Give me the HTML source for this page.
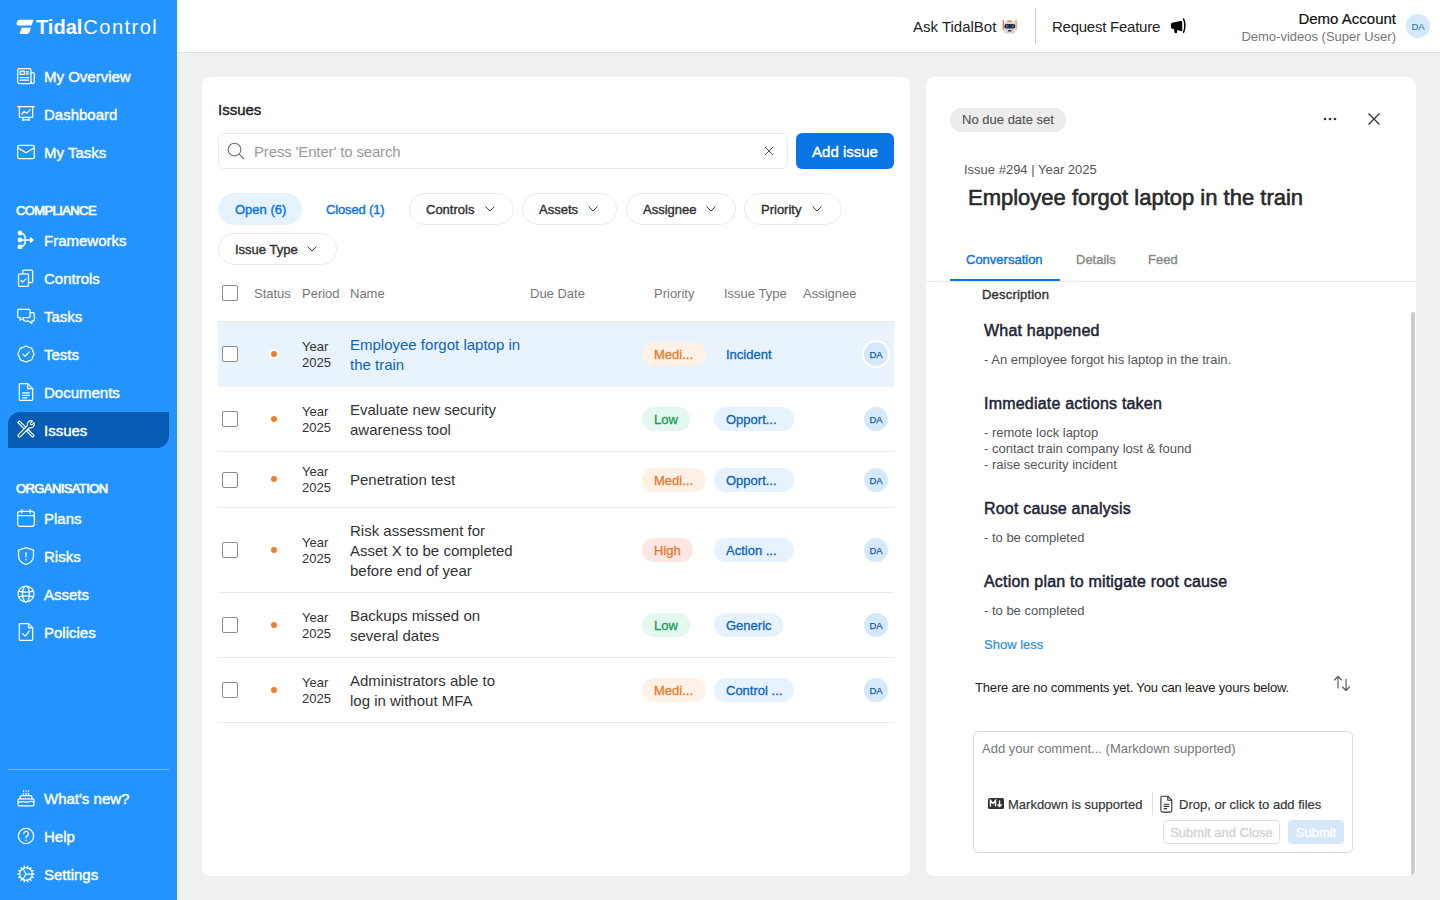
<!DOCTYPE html>
<html><head><meta charset="utf-8">
<style>
*{box-sizing:border-box;margin:0;padding:0}
html,body{width:1440px;height:900px;overflow:hidden;background:#f0f0f0;font-family:"Liberation Sans",sans-serif;color:#222}
.abs{position:absolute;white-space:nowrap}
.sb{font-weight:normal !important;-webkit-text-stroke:0.5px currentColor}
#side{position:absolute;left:0;top:0;width:177px;height:900px;background:#2394ff;color:#fff}
.nav{position:absolute;left:0;width:177px;height:36px}
.nav svg{position:absolute;left:16px;top:7px;width:20px;height:20px;fill:none;stroke:#fff;stroke-width:1.5;stroke-linecap:round;stroke-linejoin:round}
.nav .t{position:absolute;left:44px;top:0;line-height:36px;font-size:15px;font-weight:normal;-webkit-text-stroke:0.4px #fff;white-space:nowrap}
.nav.sel{left:8px;width:161px;background:#055cb2;border-radius:12px 0 12px 0}
.nav.sel svg{left:8px}
.nav.sel .t{left:36px;top:1px}
.sec{position:absolute;left:16px;font-size:13px;font-weight:normal;-webkit-text-stroke:0.7px #fff;letter-spacing:-0.6px}
#hdr{position:absolute;left:177px;top:0;width:1263px;height:53px;background:#fff;border-bottom:1px solid #e0e0e0}
.card{position:absolute;background:#fff;border-radius:8px}
.t13{font-size:13px}
.pill{position:absolute;top:193px;height:32px;border:1px solid #ebebeb;border-radius:16px;font-size:13px;font-weight:normal;-webkit-text-stroke:0.4px currentColor;color:#333;line-height:32px;padding-left:16px;white-space:nowrap}
.pill svg{position:absolute;top:12px;width:10px;height:6px;fill:none;stroke:#444;stroke-width:1}
.th{position:absolute;top:286px;font-size:13px;line-height:16px;color:#777;white-space:nowrap}
.cb{position:absolute;left:222px;width:16px;height:16px;border:1.5px solid #8c8c8c;border-radius:2px;background:#fff}
.row{position:absolute;left:218px;width:676px;border-bottom:1px solid #ebebeb}
.dot{position:absolute;left:271px;width:6px;height:6px;border-radius:50%;background:#f07f2b}
.per{position:absolute;left:302px;font-size:13px;line-height:16px;color:#333}
.nm{position:absolute;left:350px;font-size:15px;line-height:20px;color:#333;width:180px}
.bdg{position:absolute;height:24px;border-radius:12px;font-size:13px;font-weight:normal;-webkit-text-stroke:0.3px currentColor;line-height:26px;text-align:left;padding-left:12px;white-space:nowrap}
.med{left:642px;width:64px;background:#fff1e6;color:#ee7628}
.low{left:642px;width:48px;background:#e3f8ee;color:#1a9a5c}
.high{left:642px;width:51px;background:#fde6e4;color:#e8772e}
.typ{left:714px;width:80px;background:#e6f2fd;color:#0b63c0}
.av{position:absolute;left:864px;width:24px;height:24px;border-radius:50%;background:#d6e9fb;color:#1a5aa6;font-size:9.5px;line-height:25px;text-align:center;-webkit-text-stroke:0.25px #1a5aa6}

</style></head>
<body>
<div id="side">
  <svg class="abs" style="left:16px;top:19px" width="18" height="15" viewBox="0 0 18 15"><path d="M3.2 0.8H17.4L15.6 6.4H2.4C0.9 6.4 0.2 5.4 0.7 4L1.2 2.6C1.6 1.5 2.2 0.8 3.2 0.8Z" fill="#fff"/><path d="M5.6 8.8H14.9L13.9 12C13.4 13.8 12.3 14.9 10.6 14.9H3.6L5.6 8.8Z" fill="#fff"/></svg>
  <div class="abs" style="left:36px;top:16px;font-size:20px;line-height:22px;color:#fff"><span style="font-weight:bold">Tidal</span><span style="letter-spacing:1.5px;margin-left:1px">Control</span></div>
  <div class="nav" style="top:59px"><svg viewBox="0 0 24 24"><rect x="2" y="3" width="16" height="18" rx="2"/><path d="M18 8h2a2 2 0 0 1 2 2v9a2 2 0 0 1-4 0"/><rect x="5" y="6" width="5" height="4"/><path d="M12 7h3M12 9.5h3M5 14h10M5 17h10"/></svg><div class="t">My Overview</div></div>
  <div class="nav" style="top:97px"><svg viewBox="0 0 24 24"><path d="M2 3h20M4 3v13h16V3M8 20l1-4M16 20l-1-4M8 19h8"/><path d="M7 12l3-3 3 2 4-4"/></svg><div class="t">Dashboard</div></div>
  <div class="nav" style="top:135px"><svg viewBox="0 0 24 24"><rect x="2" y="4" width="20" height="16" rx="2"/><path d="M2 7l10 6 10-6"/></svg><div class="t">My Tasks</div></div>
  <div class="sec" style="top:203px">COMPLIANCE</div>
  <div class="nav" style="top:223px"><svg viewBox="0 0 19 19" style="top:7px;width:19px;height:19px"><circle cx="4" cy="3" r="2.4" fill="#fff" stroke="none"/><circle cx="4" cy="10" r="2.4" fill="#fff" stroke="none"/><circle cx="4" cy="17" r="2.4" fill="#fff" stroke="none"/><path d="M4 3C8 3.5 9.5 7 9.5 10S8 16.5 4 17M4 10H15" stroke-width="1.6"/><path d="M14 6.8L18 10 14 13.2z" fill="#fff" stroke="none"/></svg><div class="t">Frameworks</div></div>
  <div class="nav" style="top:261px"><svg viewBox="0 0 24 24"><rect x="3" y="7" width="12" height="15" rx="1.5"/><path d="M8 7V4a1.5 1.5 0 0 1 1.5-1.5h9A1.5 1.5 0 0 1 20 4v12a1.5 1.5 0 0 1-1.5 1.5H15"/><path d="M6 15l2 2 4-4"/></svg><div class="t">Controls</div></div>
  <div class="nav" style="top:299px"><svg viewBox="0 0 24 24"><path d="M3 4h12a2 2 0 0 1 2 2v6a2 2 0 0 1-2 2H9l-4 3v-3H3a2 2 0 0 1-1-1V6a2 2 0 0 1 1-2z"/><path d="M17 8h3a2 2 0 0 1 2 2v6a2 2 0 0 1-2 2h-1v3l-4-3h-4a2 2 0 0 1-2-2"/></svg><div class="t">Tasks</div></div>
  <div class="nav" style="top:337px"><svg viewBox="0 0 24 24"><path d="M21.65 12.00 L21.37 13.18 L20.73 14.24 L20.14 15.22 L19.81 16.29 L19.56 17.49 L19.02 18.60 L18.07 19.34 L16.88 19.70 L15.74 19.95 L14.73 20.40 L13.73 21.06 L12.60 21.58 L11.40 21.58 L10.27 21.06 L9.27 20.40 L8.26 19.95 L7.12 19.70 L5.93 19.34 L4.98 18.60 L4.44 17.49 L4.19 16.29 L3.86 15.22 L3.27 14.24 L2.63 13.18 L2.35 12.00 L2.63 10.82 L3.27 9.76 L3.86 8.78 L4.19 7.71 L4.44 6.51 L4.98 5.40 L5.93 4.66 L7.12 4.30 L8.26 4.05 L9.27 3.60 L10.27 2.94 L11.40 2.42 L12.60 2.42 L13.73 2.94 L14.73 3.60 L15.74 4.05 L16.88 4.30 L18.07 4.66 L19.02 5.40 L19.56 6.51 L19.81 7.71 L20.14 8.78 L20.73 9.76 L21.37 10.82 L21.65 12.00Z"/><path d="M8.3 12.2l2.6 2.6 4.9-5.3"/></svg><div class="t">Tests</div></div>
  <div class="nav" style="top:375px"><svg viewBox="0 0 24 24"><path d="M5 2h9l6 6v13a1 1 0 0 1-1 1H5a1 1 0 0 1-1-1V3a1 1 0 0 1 1-1z"/><path d="M14 2v6h6M8 13h8M8 16h8M8 19h5"/></svg><div class="t">Documents</div></div>
  <div class="nav sel" style="top:412px"><svg viewBox="0 0 24 24" style="stroke-width:1.4"><path d="M2.2 4.2L4.2 2.2L11.8 9.8L9.8 11.8Z"/><path d="M12.6 14.6L14.6 12.6L21.3 19.3A1.45 1.45 0 0 1 19.3 21.3Z"/><path d="M2.9 18.7L13.6 8A4.6 4.6 0 0 1 19.8 2.4L17.2 5L17.6 6.5L19.1 6.9L21.7 4.3A4.6 4.6 0 0 1 16.1 10.5L5.3 21.1A1.7 1.7 0 0 1 2.9 18.7Z"/></svg><div class="t">Issues</div></div>
  <div class="sec" style="top:481px">ORGANISATION</div>
  <div class="nav" style="top:501px"><svg viewBox="0 0 24 24"><rect x="2" y="4" width="20" height="18" rx="3"/><path d="M2 9h20M7 2v4M17 2v4"/></svg><div class="t">Plans</div></div>
  <div class="nav" style="top:539px"><svg viewBox="0 0 24 24"><path d="M12 2l9 3v7c0 5-4 9-9 10-5-1-9-5-9-10V5z"/><path d="M12 8v5M12 16v.5"/></svg><div class="t">Risks</div></div>
  <div class="nav" style="top:577px"><svg viewBox="0 0 24 24"><circle cx="12" cy="12" r="9.5"/><ellipse cx="12" cy="12" rx="4.2" ry="9.5"/><path d="M3.2 8.5Q12 11 20.8 8.5M3.2 15.5Q12 13 20.8 15.5"/></svg><div class="t">Assets</div></div>
  <div class="nav" style="top:615px"><svg viewBox="0 0 24 24"><path d="M5 2h10l5 5v14a1 1 0 0 1-1 1H5a1 1 0 0 1-1-1V3a1 1 0 0 1 1-1z"/><path d="M15 2v5h5M8 14l3 3 5-6"/></svg><div class="t">Policies</div></div>
  <div class="abs" style="left:8px;top:769px;width:161px;height:1px;background:rgba(255,255,255,.35)"></div>
  <div class="nav" style="top:781px"><svg viewBox="0 0 24 24"><rect x="2.5" y="13" width="19" height="8.5" rx="1.5"/><path d="M5 13v-2.5a1.5 1.5 0 0 1 1.5-1.5h11a1.5 1.5 0 0 1 1.5 1.5V13M2.5 16.5c2.5 1.2 4.5-.8 6.5 0s4 .8 6 0 4-.8 6.5 0M9 9V6.5M12 9V6.5M15 9V6.5M9 3.2v.6M12 3.2v.6M15 3.2v.6"/></svg><div class="t">What's new?</div></div>
  <div class="nav" style="top:819px"><svg viewBox="0 0 24 24"><circle cx="12" cy="12" r="9.2"/><path d="M9.3 9.3a2.8 2.8 0 1 1 3.9 2.6c-.8.4-1.2.9-1.2 1.8v.5M12 17v.3"/></svg><div class="t">Help</div></div>
  <div class="nav" style="top:857px"><svg viewBox="0 0 24 24"><circle cx="12" cy="12" r="7.6"/><path d="M19.60 12.00L21.60 12.00M18.85 15.30L20.65 16.17M16.74 17.94L17.99 19.51M13.69 19.41L14.14 21.36M10.31 19.41L9.86 21.36M7.26 17.94L6.01 19.51M5.15 15.30L3.35 16.17M4.40 12.00L2.40 12.00M5.15 8.70L3.35 7.83M7.26 6.06L6.01 4.49M10.31 4.59L9.86 2.64M13.69 4.59L14.14 2.64M16.74 6.06L17.99 4.49M18.85 8.70L20.65 7.83" stroke-width="1.6"/><path d="M12 12h7.6M12 12l-3.8-6.6M12 12l-3.8 6.6"/></svg><div class="t">Settings</div></div>
</div>
<div id="hdr">
  <div class="abs" style="left:736px;top:17px;font-size:15px;line-height:20px;color:#222">Ask TidalBot</div>
  <svg class="abs" style="left:825px;top:19px" width="16" height="16" viewBox="0 0 16 16"><rect x="0.6" y="1" width="1.7" height="10" rx="0.8" fill="#f08a3a"/><rect x="13.2" y="1" width="1.7" height="10" rx="0.8" fill="#f4a060"/><rect x="5" y="1.6" width="5.2" height="1.4" rx="0.6" fill="#f08a3a"/><rect x="2" y="3" width="11.5" height="11.6" rx="2.6" fill="#d6d6d6"/><rect x="2.3" y="5" width="11" height="4.4" rx="2" fill="#2a303c"/><rect x="4" y="5.8" width="1.7" height="2.8" rx="0.5" fill="#1f6fe0"/><rect x="10" y="5.8" width="1.7" height="2.8" rx="0.5" fill="#1f6fe0"/><rect x="6" y="11" width="3.6" height="1.4" rx="0.6" fill="#333"/></svg>
  <div class="abs" style="left:858px;top:8px;width:1px;height:36px;background:#cbcbcf"></div>
  <div class="abs" style="left:875px;top:17px;font-size:15px;line-height:20px;color:#222;letter-spacing:-0.25px">Request Feature</div>
  <svg class="abs" style="left:993px;top:18px" width="17" height="16" viewBox="0 0 17 16"><path d="M0.8 7.7C0.8 5.6 1.6 4.8 3.4 4.6L10.6 3.1C11.6 2.9 12.2 3.4 12.2 4.3V11.9C12.2 12.8 11.6 13.3 10.6 13.1L3.4 11.1C1.6 10.8 0.8 9.9 0.8 7.7Z" fill="#000"/><path d="M4 10.5L7.2 11L7 14.4C6.9 15.1 6.3 15.3 5.6 15.2C4.9 15.1 4.5 14.7 4.4 14Z" fill="#000"/><path d="M13.6 1C15.3 4.6 15.3 10.6 13.6 14.3" fill="none" stroke="#000" stroke-width="1.5" stroke-linecap="round"/></svg>
  <div class="abs" style="right:44px;top:10px;font-size:15px;line-height:18px;color:#111;text-align:right;-webkit-text-stroke:0.2px #111">Demo Account</div>
  <div class="abs" style="right:44px;top:28px;font-size:13px;line-height:17px;color:#777;text-align:right">Demo-videos (Super User)</div>
  <div class="abs" style="left:1229px;top:14px;width:24px;height:24px;border-radius:50%;background:#d6e9fb;color:#1b6fc9;font-size:9.5px;line-height:25px;text-align:center">DA</div>
</div>
<div class="card" style="left:202px;top:77px;width:708px;height:799px"></div>
<div class="abs" style="left:218px;top:101px;font-size:15px;line-height:18px;font-weight:normal;-webkit-text-stroke:0.4px currentColor;color:#222">Issues</div>
<div class="abs" style="left:218px;top:133px;width:570px;height:36px;border:1px solid #ebebeb;border-radius:6px"></div>
<svg class="abs" style="left:227px;top:142px" width="18" height="18" viewBox="0 0 18 18"><circle cx="7.5" cy="7.6" r="6.4" fill="none" stroke="#6e6e6e" stroke-width="1.1"/><path d="M12.2 12.2l4.8 4.8" stroke="#6e6e6e" stroke-width="1.1"/></svg>
<div class="abs" style="left:254px;top:143px;font-size:15px;line-height:18px;color:#9a9a9a;letter-spacing:-0.15px">Press 'Enter' to search</div>
<svg class="abs" style="left:764px;top:146px" width="10" height="10" viewBox="0 0 10 10"><path d="M1 1l8 8M9 1L1 9" stroke="#444" stroke-width="0.9"/></svg>
<div class="abs" style="left:796px;top:133px;width:98px;height:36px;border-radius:6px;background:#0a74e3;color:#fff;font-size:15px;font-weight:normal;-webkit-text-stroke:0.4px currentColor;line-height:38px;text-align:center">Add issue</div>
<div class="pill" style="left:218px;width:84px;border-color:#e6f2fd;background:#e6f2fd;color:#0a74e3">Open (6)</div>
<div class="pill" style="left:309px;width:90px;border-color:transparent;color:#0a74e3;letter-spacing:-0.15px">Closed (1)</div>
<div class="pill" style="left:409px;width:105px">Controls<svg style="left:75px" viewBox="0 0 10 6"><path d="M0.5 0.5L5 5 9.5 0.5"/></svg></div>
<div class="pill" style="left:522px;width:95px">Assets<svg style="left:65px" viewBox="0 0 10 6"><path d="M0.5 0.5L5 5 9.5 0.5"/></svg></div>
<div class="pill" style="left:626px;width:110px">Assignee<svg style="left:79px" viewBox="0 0 10 6"><path d="M0.5 0.5L5 5 9.5 0.5"/></svg></div>
<div class="pill" style="left:744px;width:98px">Priority<svg style="left:67px" viewBox="0 0 10 6"><path d="M0.5 0.5L5 5 9.5 0.5"/></svg></div>
<div class="pill" style="left:218px;top:233px;width:119px">Issue Type<svg style="left:88px" viewBox="0 0 10 6"><path d="M0.5 0.5L5 5 9.5 0.5"/></svg></div>
<div class="cb" style="top:285px"></div>
<div class="th" style="left:254px">Status</div>
<div class="th" style="left:302px">Period</div>
<div class="th" style="left:350px">Name</div>
<div class="th" style="left:530px">Due Date</div>
<div class="th" style="left:654px">Priority</div>
<div class="th" style="left:724px">Issue Type</div>
<div class="th" style="left:803px">Assignee</div>
<div class="row" style="top:321px;height:66px;background:#e8f3fe;border-top:1px solid #ebebeb;border-bottom-color:#e8f3fe"></div>
<div class="cb" style="top:346px"></div>
<div class="dot" style="top:351px;box-shadow:0 0 0 2px #fff;"></div>
<div class="per" style="top:339px">Year<br>2025</div>
<div class="nm" style="top:335px;color:#0b63c0;">Employee forgot laptop in<br>the train</div>
<div class="bdg med" style="top:342px">Medi...</div>
<div class="bdg typ" style="top:342px;width:80px;background:transparent;">Incident</div>
<div class="av" style="top:342px;box-shadow:0 0 0 2px #fff;">DA</div>
<div class="row" style="top:387px;height:65px;"></div>
<div class="cb" style="top:411px"></div>
<div class="dot" style="top:416px;"></div>
<div class="per" style="top:404px">Year<br>2025</div>
<div class="nm" style="top:400px;">Evaluate new security<br>awareness tool</div>
<div class="bdg low" style="top:407px">Low</div>
<div class="bdg typ" style="top:407px;width:80px;">Opport...</div>
<div class="av" style="top:407px;">DA</div>
<div class="row" style="top:452px;height:56px;"></div>
<div class="cb" style="top:472px"></div>
<div class="dot" style="top:476px;"></div>
<div class="per" style="top:464px">Year<br>2025</div>
<div class="nm" style="top:470px;">Penetration test</div>
<div class="bdg med" style="top:468px">Medi...</div>
<div class="bdg typ" style="top:468px;width:80px;">Opport...</div>
<div class="av" style="top:468px;">DA</div>
<div class="row" style="top:508px;height:85px;"></div>
<div class="cb" style="top:542px"></div>
<div class="dot" style="top:547px;"></div>
<div class="per" style="top:535px">Year<br>2025</div>
<div class="nm" style="top:521px;">Risk assessment for<br>Asset X to be completed<br>before end of year</div>
<div class="bdg high" style="top:538px">High</div>
<div class="bdg typ" style="top:538px;width:80px;">Action ...</div>
<div class="av" style="top:538px;">DA</div>
<div class="row" style="top:593px;height:65px;"></div>
<div class="cb" style="top:617px"></div>
<div class="dot" style="top:622px;"></div>
<div class="per" style="top:610px">Year<br>2025</div>
<div class="nm" style="top:606px;">Backups missed on<br>several dates</div>
<div class="bdg low" style="top:613px">Low</div>
<div class="bdg typ" style="top:613px;width:69px;">Generic</div>
<div class="av" style="top:613px;">DA</div>
<div class="row" style="top:658px;height:65px;"></div>
<div class="cb" style="top:682px"></div>
<div class="dot" style="top:687px;"></div>
<div class="per" style="top:675px">Year<br>2025</div>
<div class="nm" style="top:671px;">Administrators able to<br>log in without MFA</div>
<div class="bdg med" style="top:678px">Medi...</div>
<div class="bdg typ" style="top:678px;width:80px;">Control ...</div>
<div class="av" style="top:678px;">DA</div>

<div class="card" style="left:926px;top:77px;width:490px;height:799px;overflow:hidden">
  <div class="abs" style="left:24px;top:31px;width:116px;height:24px;border-radius:12px;background:#ececec;color:#555;font-size:13px;line-height:23px;text-align:center;-webkit-text-stroke:0.15px #555">No due date set</div>
  <svg class="abs" style="left:397px;top:40px" width="14" height="4" viewBox="0 0 14 4"><circle cx="2" cy="2" r="1.3" fill="#333"/><circle cx="7" cy="2" r="1.3" fill="#333"/><circle cx="12" cy="2" r="1.3" fill="#333"/></svg>
  <svg class="abs" style="left:441px;top:35px" width="14" height="14" viewBox="0 0 14 14"><path d="M1.5 1.5l11 11M12.5 1.5l-11 11" stroke="#333" stroke-width="1.3"/></svg>
  <div class="abs" style="left:38px;top:85px;font-size:13px;line-height:16px;color:#555">Issue #294 | Year 2025</div>
  <div class="abs" style="left:42px;top:108px;font-size:22px;line-height:26px;font-weight:normal;-webkit-text-stroke:0.6px currentColor;color:#2a2a2a">Employee forgot laptop in the train</div>
  <div class="abs" style="left:40px;top:175px;font-size:13px;line-height:16px;font-weight:normal;-webkit-text-stroke:0.4px currentColor;color:#0a74e3">Conversation</div>
  <div class="abs" style="left:150px;top:175px;font-size:13px;line-height:16px;font-weight:normal;-webkit-text-stroke:0.4px currentColor;color:#8a8a8a">Details</div>
  <div class="abs" style="left:222px;top:175px;font-size:13px;line-height:16px;font-weight:normal;-webkit-text-stroke:0.4px currentColor;color:#8a8a8a">Feed</div>
  <div class="abs" style="left:0;top:204px;width:490px;height:1px;background:#ebebeb"></div>
  <div class="abs" style="left:24px;top:202px;width:110px;height:2px;background:#0a74e3"></div>
  <div class="abs" style="left:56px;top:210px;font-size:13px;line-height:16px;font-weight:normal;-webkit-text-stroke:0.4px currentColor;color:#333;letter-spacing:0.2px">Description</div>
  <div class="abs" style="left:485px;top:235px;width:3.5px;height:564px;background:#cdcdcd;border-radius:2px"></div>
  <div class="abs" style="left:58px;top:244px;font-size:16px;line-height:20px;font-weight:normal;-webkit-text-stroke:0.5px currentColor;color:#1e2433;letter-spacing:0.2px">What happened</div>
  <div class="abs" style="left:58px;top:275px;font-size:13px;line-height:16px;color:#555">- An employee forgot his laptop in the train.</div>
  <div class="abs" style="left:58px;top:317px;font-size:16px;line-height:20px;font-weight:normal;-webkit-text-stroke:0.5px currentColor;color:#1e2433;letter-spacing:0.2px">Immediate actions taken</div>
  <div class="abs" style="left:58px;top:348px;font-size:13px;line-height:16px;color:#555">- remote lock laptop<br>- contact train company lost &amp; found<br>- raise security incident</div>
  <div class="abs" style="left:58px;top:422px;font-size:16px;line-height:20px;font-weight:normal;-webkit-text-stroke:0.5px currentColor;color:#1e2433;letter-spacing:0.2px">Root cause analysis</div>
  <div class="abs" style="left:58px;top:453px;font-size:13px;line-height:16px;color:#555">- to be completed</div>
  <div class="abs" style="left:58px;top:495px;font-size:16px;line-height:20px;font-weight:normal;-webkit-text-stroke:0.5px currentColor;color:#1e2433;letter-spacing:0.2px">Action plan to mitigate root cause</div>
  <div class="abs" style="left:58px;top:526px;font-size:13px;line-height:16px;color:#555">- to be completed</div>
  <div class="abs" style="left:58px;top:560px;font-size:13px;line-height:16px;color:#2a8ef0;-webkit-text-stroke:0.2px #2a8ef0">Show less</div>
  <div class="abs" style="left:49px;top:603px;font-size:13px;line-height:16px;color:#222;letter-spacing:-0.17px">There are no comments yet. You can leave yours below.</div>
  <svg class="abs" style="left:407px;top:598px" width="18" height="17" viewBox="0 0 18 17"><path d="M5 13V1.5M1.5 5l3.5-3.5 3.5 3.5M13 4v11.5M9.5 12l3.5 3.5 3.5-3.5" fill="none" stroke="#555" stroke-width="1.15" stroke-linecap="round" stroke-linejoin="round"/></svg>
  <div class="abs" style="left:47px;top:654px;width:380px;height:122px;border:1px solid #ddd;border-radius:5px"></div>
  <div class="abs" style="left:56px;top:664px;font-size:13px;line-height:16px;color:#777">Add your comment... (Markdown supported)</div>
  <svg class="abs" style="left:62px;top:721px" width="16" height="11" viewBox="0 0 16 11"><rect x="0" y="0" width="16" height="11" rx="1.5" fill="#333"/><path d="M2.5 8.5V2.5l2.5 3 2.5-3v6M11.5 2.5v6M9.5 6.5l2 2 2-2" fill="none" stroke="#fff" stroke-width="1.4"/></svg>
  <div class="abs" style="left:82px;top:720px;font-size:13px;line-height:16px;color:#383838;-webkit-text-stroke:0.2px #383838">Markdown is supported</div>
  <div class="abs" style="left:226px;top:715px;width:1px;height:23px;background:#ddd"></div>
  <svg class="abs" style="left:234px;top:718px" width="13" height="18" viewBox="0 0 13 18"><path d="M2.5 1.2h5.3l4 4v10.3a1.6 1.6 0 0 1-1.6 1.6H2.5A1.6 1.6 0 0 1 0.9 15.5V2.8A1.6 1.6 0 0 1 2.5 1.2zM7.8 1.2v4h4M3.6 9.2h5.6M3.6 11.4h5.6M3.6 13.6h3.4" fill="none" stroke="#333" stroke-width="1.1" stroke-linejoin="round"/></svg>
  <div class="abs" style="left:253px;top:720px;font-size:13px;line-height:16px;color:#383838;-webkit-text-stroke:0.2px #383838">Drop, or click to add files</div>
  <div class="abs" style="left:237px;top:743px;width:117px;height:24px;border:1px solid #e0e0e0;border-radius:4px;color:#d4d4d4;font-size:13px;font-weight:normal;-webkit-text-stroke:0.4px currentColor;line-height:23px;text-align:center">Submit and Close</div>
  <div class="abs" style="left:362px;top:743px;width:56px;height:24px;border-radius:4px;background:#d5e8fb;color:#fff;font-size:13px;font-weight:normal;-webkit-text-stroke:0.4px currentColor;line-height:25px;text-align:center">Submit</div>
</div>
</body></html>
